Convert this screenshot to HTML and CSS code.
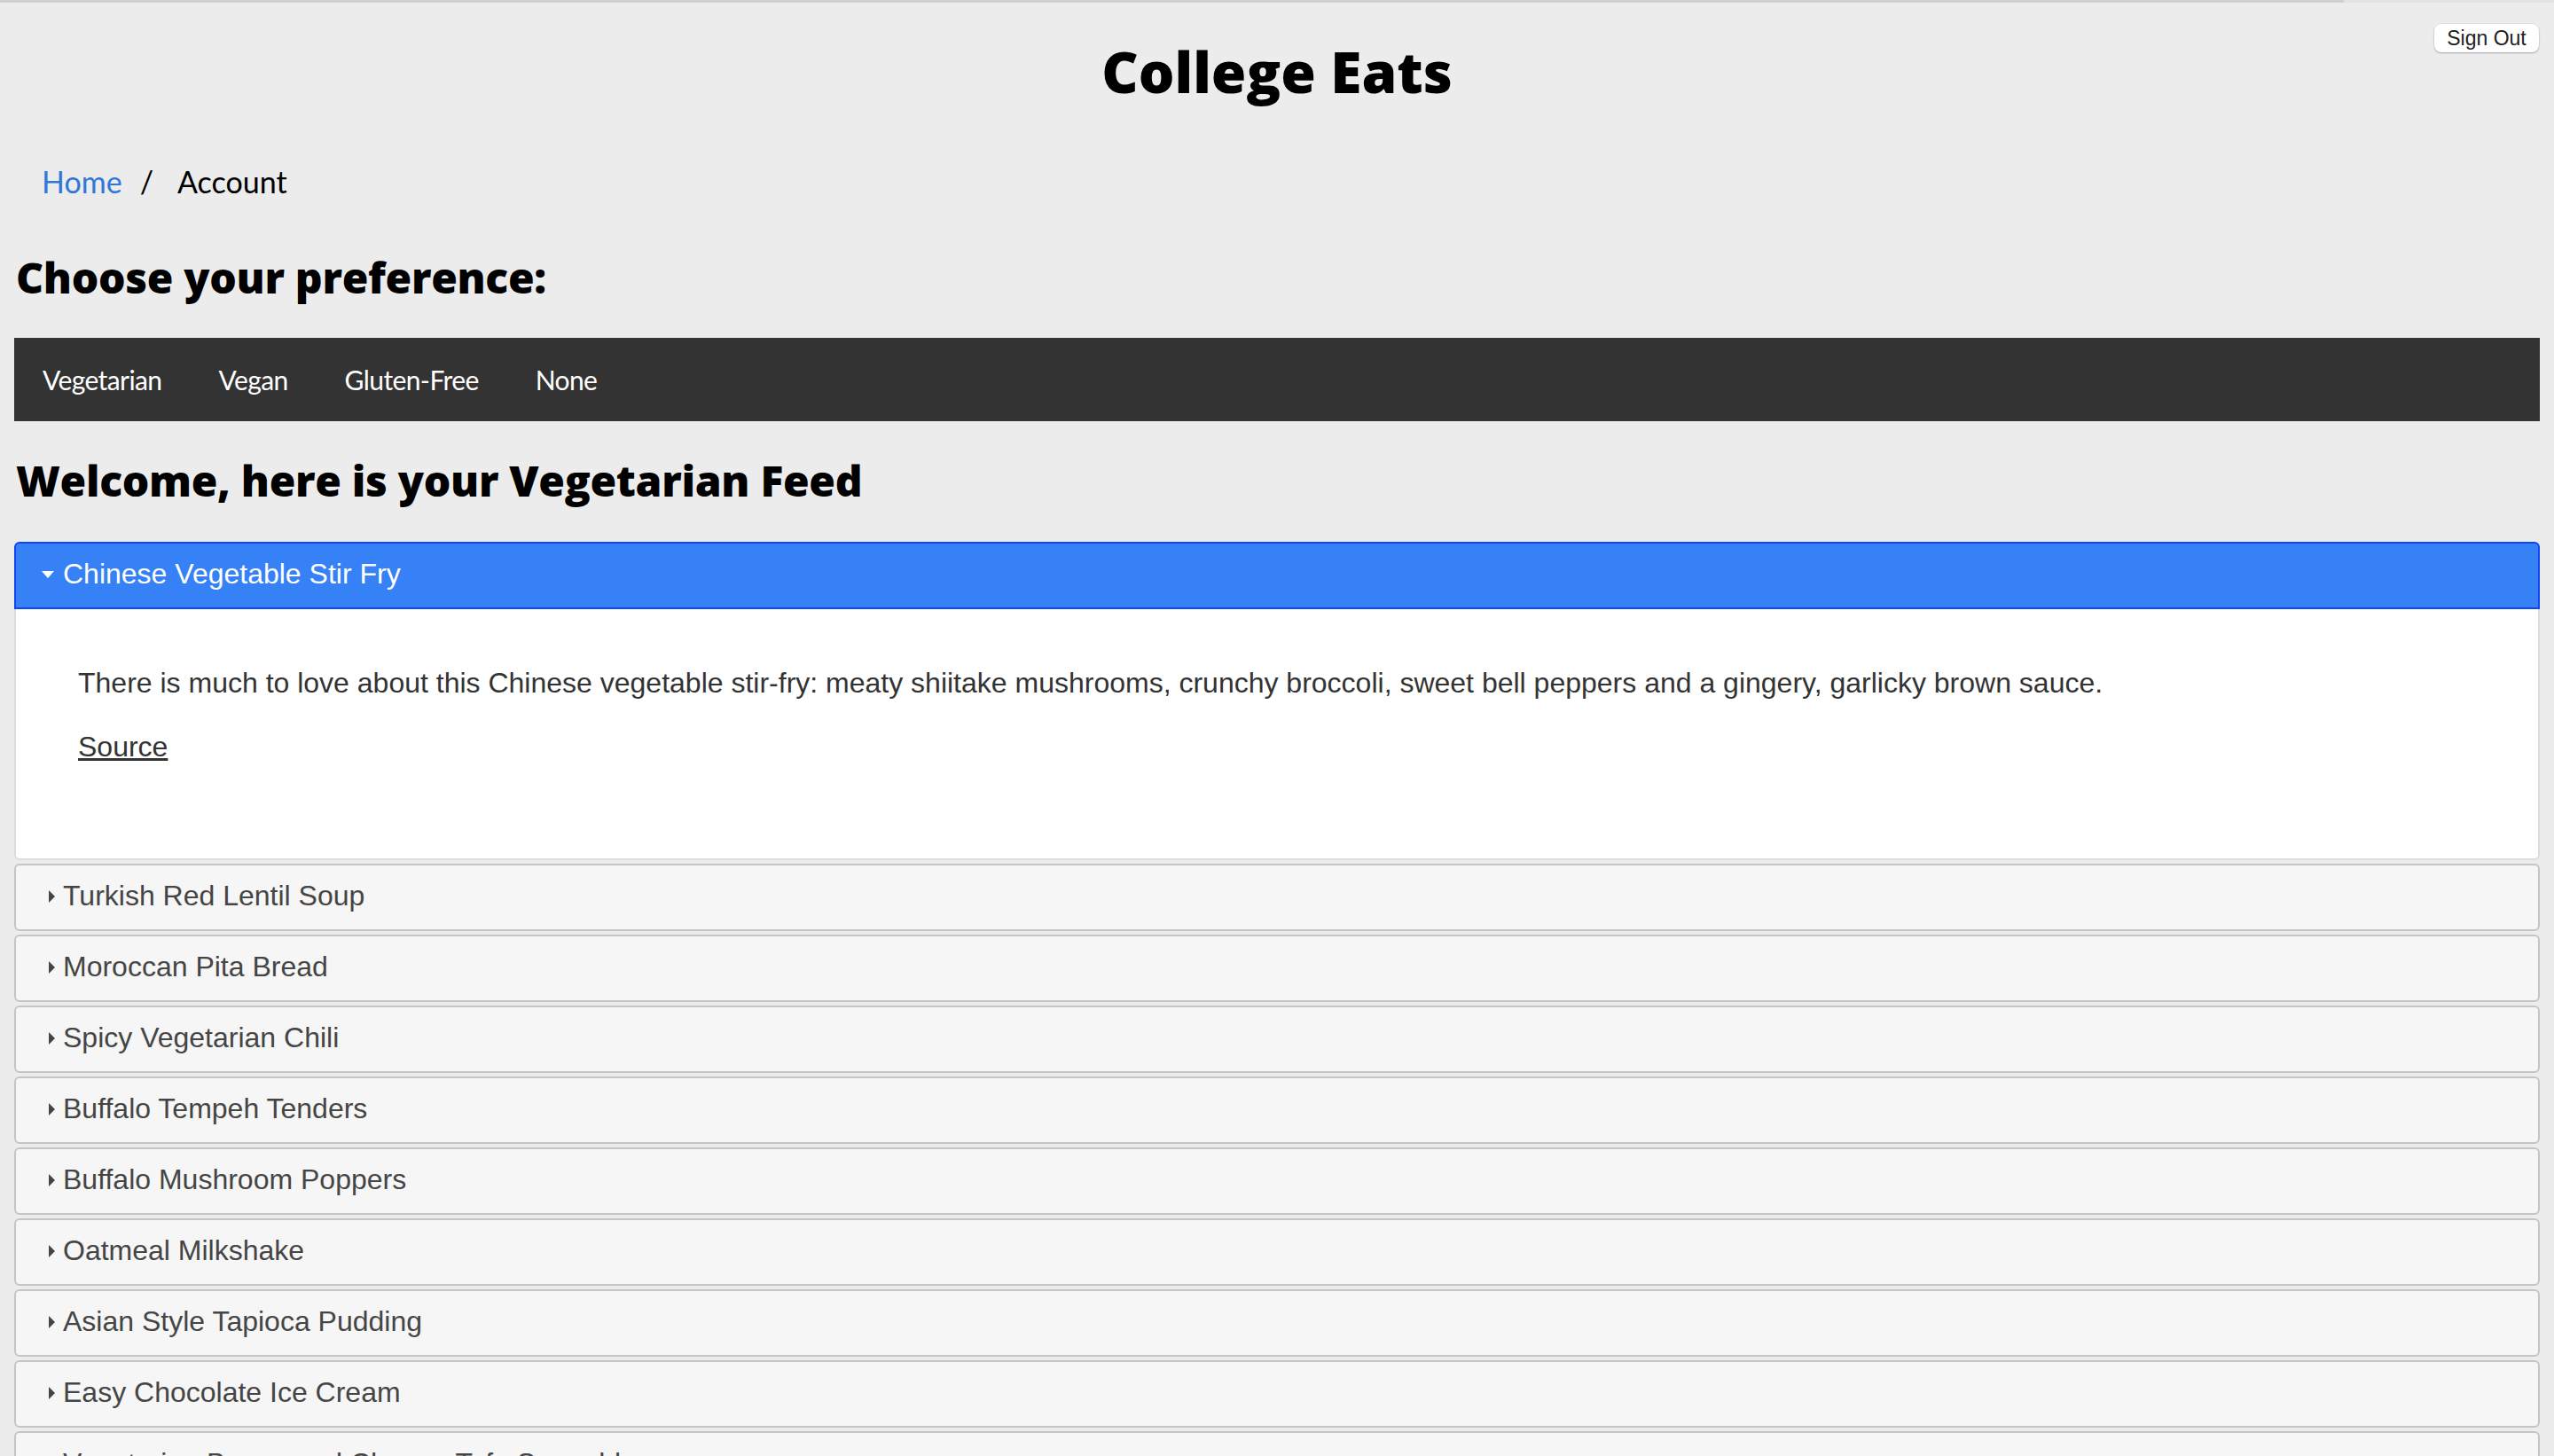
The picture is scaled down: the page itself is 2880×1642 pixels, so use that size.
FILE: index.html
```html
<!DOCTYPE html>
<html lang="en">
<head>
<meta charset="utf-8">
<title>College Eats</title>
<link rel="stylesheet" href="styles.css">
</head>
<body>
<div class="toprule"></div>
<div class="page">
  <header class="masthead">
    <h1 class="title">College Eats</h1>
    <button class="signout" type="button">Sign Out</button>
  </header>

  <ul class="breadcrumb">
    <li><a href="#" class="crumb-link">Home</a></li>
    <li class="crumb-sep">/</li>
    <li class="crumb-current">Account</li>
  </ul>

  <h2 class="section-title choose">Choose your preference:</h2>

  <nav class="prefbar">
    <a href="#" class="pref">Vegetarian</a>
    <a href="#" class="pref">Vegan</a>
    <a href="#" class="pref">Gluten-Free</a>
    <a href="#" class="pref">None</a>
  </nav>

  <h2 class="section-title welcome">Welcome, here is your Vegetarian Feed</h2>

  <div class="accordion">
    <h3 class="acc-header active"><span class="acc-icon down"></span>Chinese Vegetable Stir Fry</h3>
    <div class="acc-content">
      <p>There is much to love about this Chinese vegetable stir-fry: meaty shiitake mushrooms, crunchy broccoli, sweet bell peppers and a gingery, garlicky brown sauce.</p>
      <p><a href="#" class="source-link">Source</a></p>
    </div>
    <h3 class="acc-header"><span class="acc-icon right"></span>Turkish Red Lentil Soup</h3>
    <h3 class="acc-header"><span class="acc-icon right"></span>Moroccan Pita Bread</h3>
    <h3 class="acc-header"><span class="acc-icon right"></span>Spicy Vegetarian Chili</h3>
    <h3 class="acc-header"><span class="acc-icon right"></span>Buffalo Tempeh Tenders</h3>
    <h3 class="acc-header"><span class="acc-icon right"></span>Buffalo Mushroom Poppers</h3>
    <h3 class="acc-header"><span class="acc-icon right"></span>Oatmeal Milkshake</h3>
    <h3 class="acc-header"><span class="acc-icon right"></span>Asian Style Tapioca Pudding</h3>
    <h3 class="acc-header"><span class="acc-icon right"></span>Easy Chocolate Ice Cream</h3>
    <h3 class="acc-header"><span class="acc-icon right"></span>Vegetarian Bacon and Cheese Tofu Scramble</h3>
  </div>
</div>
</body>
</html>
```

FILE: styles.css
```css
html, body {
  margin: 0;
  padding: 0;
}

body {
  background: #ececec;
  font-family: "Lato", "Open Sans", sans-serif;
  color: #000;
  overflow: hidden;
}

.toprule {
  height: 3px;
  background: linear-gradient(to right, #cfcfcf 0, #cfcfcf 2643px, #e3e3e3 2643px, #e3e3e3 100%);
}

.page {
  padding: 0 16px;
}

.masthead {
  position: relative;
  padding-top: 38px;
}

.title {
  margin: 0;
  font-family: "Open Sans", "Lato", sans-serif;
  font-weight: 800;
  font-size: 64px;
  line-height: 80px;
  letter-spacing: 0;
  text-align: center;
}

.signout {
  position: absolute;
  top: 24px;
  right: 1px;
  width: 118px;
  height: 32px;
  padding: 0;
  border: 0;
  border-radius: 8px;
  background: #fff;
  box-shadow: 0 1px 2px rgba(0, 0, 0, 0.28), 0 0 0 1px rgba(0, 0, 0, 0.04);
  font-family: "Liberation Sans", Arial, sans-serif;
  font-size: 23px;
  color: #222;
}

.breadcrumb {
  list-style: none;
  margin: 62px 0 0;
  padding: 0 32px 0 31px;
  display: flex;
  font-size: 34px;
  line-height: 44px;
}

.crumb-link {
  color: #2f78d8;
  text-decoration: none;
}

.crumb-sep {
  margin: 0 27px 0 20px;
}

.crumb-current {
  color: #000;
}

.section-title {
  margin: 0;
  font-family: "Open Sans", "Lato", sans-serif;
  font-weight: 800;
  font-size: 48px;
  line-height: 58px;
  letter-spacing: -0.3px;
  padding-left: 2px;
}

.choose {
  margin-top: 57px;
}

.prefbar {
  margin-top: 39px;
  height: 94px;
  background: #333;
  display: flex;
}

.pref {
  display: block;
  padding: 0 32px;
  line-height: 95px;
  font-size: 30px;
  letter-spacing: -0.6px;
  color: #fff;
  text-decoration: none;
}

.welcome {
  margin-top: 38px;
}

.accordion {
  margin-top: 40px;
  font-family: "Liberation Sans", Arial, Helvetica, sans-serif;
}

.acc-header {
  margin: 4px 0 0;
  height: 76px;
  box-sizing: border-box;
  padding: 16px 8px 19px 29px;
  display: flex;
  align-items: center;
  border: 2px solid #c5c5c5;
  border-radius: 6px;
  background: #f6f6f6;
  color: #454545;
  font-size: 32px;
  font-weight: normal;
  line-height: 37px;
}

.acc-header:first-child {
  margin-top: 0;
}

.acc-header.active {
  background: #3681f6;
  border-color: #1145f5;
  color: #fff;
  border-bottom-left-radius: 0;
  border-bottom-right-radius: 0;
}

.acc-icon {
  width: 14px;
  height: 14px;
  margin-right: 10px;
  flex: none;
  display: flex;
  align-items: center;
  justify-content: center;
}

.acc-icon.right::before {
  content: "";
  border-left: 7px solid #454545;
  border-top: 7px solid transparent;
  border-bottom: 7px solid transparent;
  margin-left: 8px;
}

.acc-icon.down::before {
  content: "";
  border-top: 8px solid #fff;
  border-left: 7px solid transparent;
  border-right: 7px solid transparent;
  margin-left: 0;
}

.acc-content {
  box-sizing: border-box;
  height: 283px;
  padding: 35px 70px 0;
  background: #fff;
  border: 2px solid #dddddd;
  border-top: 0;
  border-radius: 0 0 6px 6px;
  color: #333;
  font-size: 32px;
  line-height: 37px;
}

.acc-content p {
  margin: 30px 0 35px;
}

.source-link {
  color: #333;
  text-decoration: underline;
}
```
